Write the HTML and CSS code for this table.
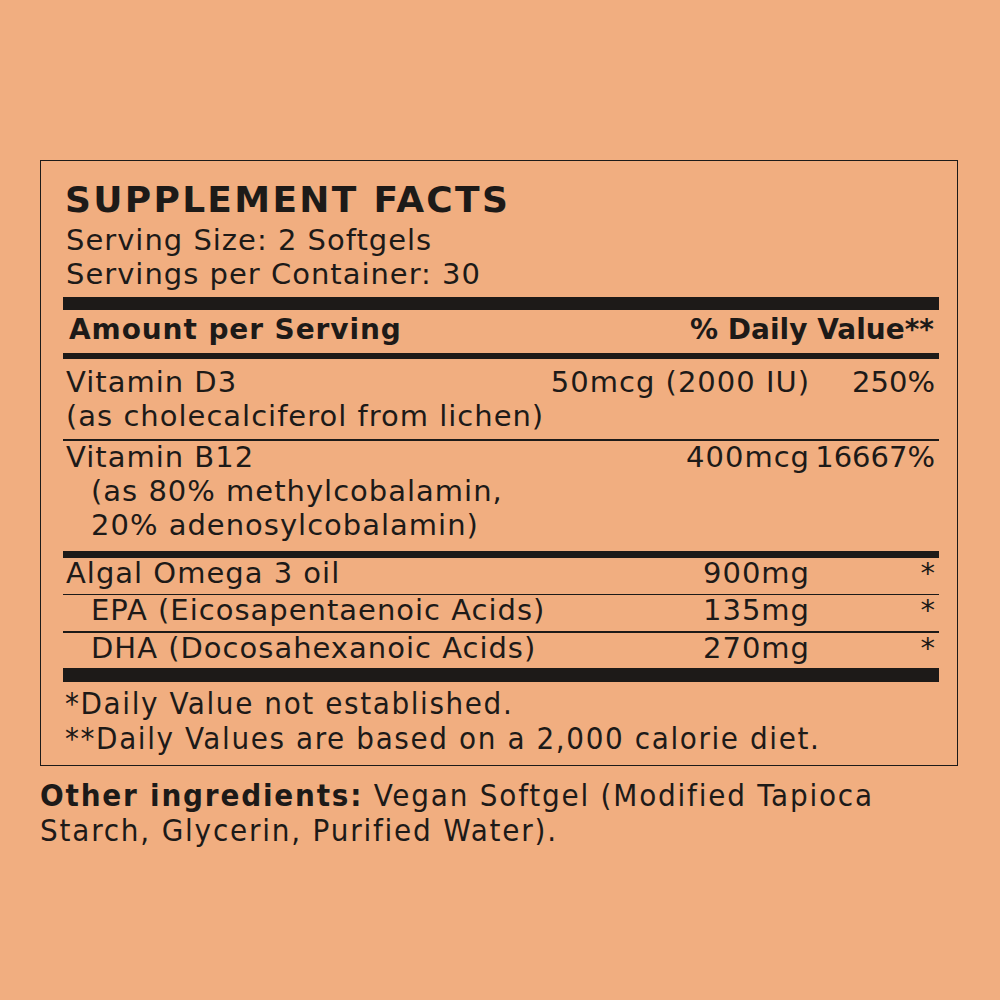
FILE: index.html
```html
<!DOCTYPE html>
<html>
<head>
<meta charset="utf-8">
<link rel="stylesheet" href="styles.css">
</head>
<body>
<div class="page">
  <div class="panel">
    <div class="title">SUPPLEMENT FACTS</div>
    <div class="meta first">Serving Size: 2 Softgels</div>
    <div class="meta">Servings per Container: 30</div>
    <div class="bar bar-xl"></div>
    <div class="head">
      <span class="name">Amount per Serving</span>
      <span class="dvh">% Daily Value**</span>
    </div>
    <div class="bar bar-m"></div>
    <div class="row">
      <div class="line"><span class="name">Vitamin D3</span><span class="amt">50mcg (2000 IU)</span><span class="dv">250%</span></div>
      <div class="line">(as cholecalciferol from lichen)</div>
    </div>
    <div class="rule"></div>
    <div class="row row2">
      <div class="line"><span class="name">Vitamin B12</span><span class="amt">400mcg</span><span class="dv">16667%</span></div>
      <div class="line sub">(as 80% methylcobalamin,</div>
      <div class="line sub">20% adenosylcobalamin)</div>
    </div>
    <div class="bar bar-m2"></div>
    <div class="line tight"><span class="name">Algal Omega 3 oil</span><span class="amt">900mg</span><span class="dv">*</span></div>
    <div class="rule"></div>
    <div class="line tight"><span class="name indent">EPA (Eicosapentaenoic Acids)</span><span class="amt">135mg</span><span class="dv">*</span></div>
    <div class="rule"></div>
    <div class="line tight"><span class="name indent">DHA (Docosahexanoic Acids)</span><span class="amt">270mg</span><span class="dv">*</span></div>
    <div class="bar bar-xl2"></div>
    <div class="notes">
      <div>*Daily Value not established.</div>
      <div>**Daily Values are based on a 2,000 calorie diet.</div>
    </div>
  </div>
  <p class="other"><b>Other ingredients:</b> Vegan Softgel (Modified Tapioca<br>Starch, Glycerin, Purified Water).</p>
</div>
</body>
</html>
```

FILE: styles.css
```css
html, body {
  margin: 0;
  padding: 0;
  background: #f1ae80;
}
body {
  font-family: "DejaVu Sans", sans-serif;
  color: #1d1a18;
  width: 1000px;
  height: 1000px;
}
.page {
  padding: 160px 0 0 40px;
}
.panel {
  width: 918px;
  height: 606px;
  box-sizing: border-box;
  border: 1.5px solid #1d1a18;
  padding: 19px 18px 0 22px;
}
.title {
  font-size: 36px;
  line-height: 40px;
  font-weight: 700;
  letter-spacing: 2.3px;
  padding-left: 2px;
}
.meta {
  font-size: 29px;
  line-height: 34px;
  letter-spacing: 1px;
  padding-left: 3px;
}
.meta.first { margin-top: 3px; }
.bar { background: #1d1a18; }
.bar-xl { height: 13px; margin-top: 6px; }
.bar-m { height: 6px; margin-top: 6px; }
.bar-m2 { height: 7px; margin-top: 9px; }
.bar-xl2 { height: 14px; margin-top: 5px; }
.rule { height: 1.5px; background: #1d1a18; margin-top: 6px; }
.head {
  display: flex;
  font-size: 28px;
  line-height: 34px;
  font-weight: 700;
  margin-top: 3px;
  padding: 0 5px 0 6px;
}
.head .name { flex: 1; letter-spacing: 0.9px; }
.row { margin-top: 6px; }
.row.row2 { margin-top: -1px; }
.line {
  display: flex;
  font-size: 29px;
  line-height: 34px;
  letter-spacing: 1px;
  padding: 0 4px 0 3px;
}
.line .name { flex: 1; }
.line .amt { text-align: right; }
.line .dv { width: 125px; text-align: right; letter-spacing: 0; }
.line.sub { padding-left: 28px; }
.name.indent { padding-left: 25px; }
.line.tight { line-height: 30px; }
.notes {
  font-family: "DejaVu Sans Condensed", "DejaVu Sans", sans-serif;
  font-stretch: condensed;
  font-size: 31px;
  line-height: 35px;
  letter-spacing: 1.6px;
  padding: 4px 0 0 2px;
}
.other {
  margin: 12px 0 0 0;
  font-family: "DejaVu Sans Condensed", "DejaVu Sans", sans-serif;
  font-stretch: condensed;
  font-size: 31px;
  line-height: 35px;
  letter-spacing: 1.8px;
}
.other b { font-weight: 700; }
```
